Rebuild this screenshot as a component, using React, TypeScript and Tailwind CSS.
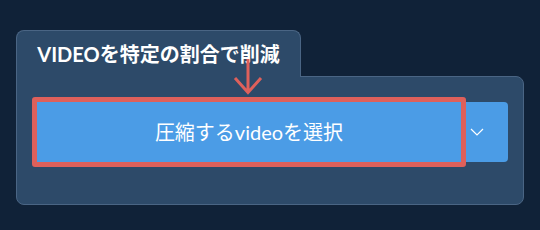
export default function App() {
  return (
    <div
      className="min-h-[230px] w-[540px] bg-[#102238] pl-4 pt-[30px]"
      style={{ fontFamily: 'Lato, "Noto Sans CJK JP", sans-serif' }}
    >
      <div className="relative w-[508px]">
        {/* Tab */}
        <div className="relative z-10 -mb-px flex h-[47px] w-[285px] items-center justify-center rounded-t-[8px] border border-b-0 border-[#4a6584] bg-[#2d4a69]">
          <span className="text-[20px] font-bold leading-none text-white">VIDEOを特定の割合で削減</span>
        </div>

        {/* Panel */}
        <div className="rounded-b-[8px] rounded-tr-[8px] border border-[#4a6584] bg-[#2d4a69] px-[15px] pb-[37px] pt-[20px]">
          <div className="flex items-center">
            <button className="flex h-[70px] flex-1 items-center justify-center rounded-[3px] border-[5px] border-[#de605b] bg-[#4b9ce6] text-[20px] text-white">
              圧縮するvideoを選択
            </button>
            <button className="flex h-[60px] w-[42px] items-center justify-start rounded-r-[4px] bg-[#4b9ce6] pl-[4px]">
              <svg width="14" height="8" viewBox="0 0 14 8" fill="none">
                <path d="M1 1l6 6 6-6" stroke="white" strokeWidth="1.2" />
              </svg>
            </button>
          </div>
        </div>

        {/* Red annotation arrow */}
        <svg
          className="absolute left-[217px] top-[28px] z-20"
          width="32"
          height="38"
          viewBox="0 0 32 38"
          fill="none"
        >
          <path d="M15 1v34M2 20l13 14.5L28 20" stroke="#de605b" strokeWidth="3" />
        </svg>
      </div>
    </div>
  )
}
